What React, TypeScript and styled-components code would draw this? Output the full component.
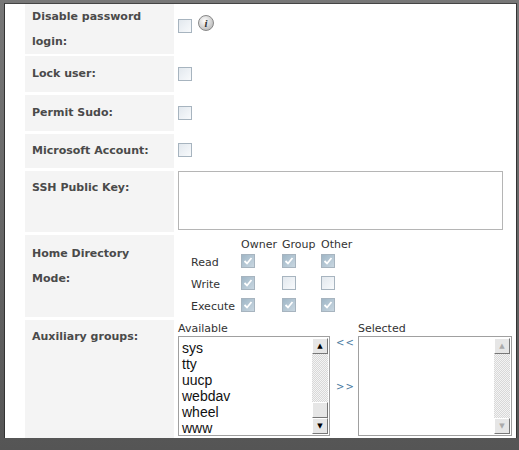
import React from "react";
import styled, { createGlobalStyle } from "styled-components";

const G = createGlobalStyle`
  html, body { margin:0; padding:0; background:#6b6b6b; width:519px; height:450px; overflow:hidden; }
`;
const Page = styled.div`
  width:519px; height:450px; position:relative; background:linear-gradient(#777,#555);
  padding:3px 2px 0 4px; box-sizing:border-box;
`;
const Dialog = styled.div`
  background:#fff; height:435px; border-left:1px solid #333; border-top:1px solid #444; border-right:1px solid #333;
  overflow:hidden; padding-left:20px; box-sizing:border-box;
  font-family:"DejaVu Sans", Verdana, sans-serif;
`;
const Row = styled.div<{ h: number }>`
  display:grid; grid-template-columns:149px 1fr; column-gap:4px; height:${p => p.h}px; margin-bottom:3px;
`;
const Label = styled.div<{ pt: number }>`
  background:#f4f4f4; color:#4a4a4a; font-weight:bold; font-size:11px; line-height:25px;
  padding:${p => p.pt}px 0 0 7px; box-sizing:border-box;
`;
const Value = styled.div<{ pt?: number }>`
  padding-top:${p => p.pt ?? 0}px; display:flex; align-items:flex-start; gap:6px; position:relative;
`;
const Box = styled.span<{ on?: boolean }>`
  display:inline-block; width:14px; height:14px; border:1px solid #a7b4bf;
  background:linear-gradient(135deg,#e2e8ee,#f8fafc); position:relative; box-sizing:border-box;
  ${p => p.on ? `background:linear-gradient(135deg,#9fb6c6,#c9d7e1);` : ""}
`;
const Check = () => (
  <svg width="12" height="12" viewBox="0 0 12 12" style={{ position: "absolute", left: 0, top: 0 }}>
    <path d="M2.5 6 L5 8.5 L9.5 3" stroke="#fff" strokeWidth="1.8" fill="none" />
  </svg>
);
const CB = ({ on }: { on?: boolean }) => <Box on={on}>{on && <Check />}</Box>;
const Info = styled.span`
  width:16px; height:16px; border-radius:50%; background:radial-gradient(circle at 40% 35%,#fff,#aaa);
  border:1px solid #888; box-sizing:border-box; font:italic bold 11px "Liberation Serif",serif; color:#333;
  display:flex; align-items:center; justify-content:center; margin-top:-4px;
`;
const TA = styled.div`
  width:325px; height:59px; border:1px solid #b5b5b5; box-sizing:border-box;
`;
const Perm = styled.div`
  display:grid; grid-template-columns:50px 41px 39px 40px; row-gap:5px; padding:3px 0 0 13px;
  font-size:11px; color:#333; align-items:center; align-content:start;
`;
const PH = styled.div` font-size:11px; color:#333; margin-bottom:-2px; `;
const Groups = styled.div`
  display:grid; grid-template-columns:152px 28px 154px; font-size:11px; color:#333; align-content:start; padding-top:2px;
`;
const ListBox = styled.div`
  height:100px; border:1px solid #a0a0a0; box-sizing:border-box; display:flex; margin-top:1px;
`;
const Items = styled.div`
  flex:1; padding:3px 0 0 3px; font:14px/16px "Liberation Sans", Arial, sans-serif; color:#111;
`;
const Bar = styled.div`
  width:16px; display:flex; flex-direction:column; margin:1px;
  background:repeating-conic-gradient(#d8d8d8 0 25%, #f4f4f4 0 50%) 0 0/2px 2px;
`;
const Btn = styled.div<{ dim?: boolean }>`
  height:16px; background:#e6e6e6; border:1px solid; border-color:#fff #777 #777 #fff; box-sizing:border-box;
  display:flex; align-items:center; justify-content:center; font-size:7px; color:${p => p.dim ? "#aaa" : "#000"};
`;
const Thumb = styled.div` height:14px; background:#e6e6e6; border:1px solid; border-color:#fff #777 #777 #fff; `;
const Arrows = styled.div`
  display:flex; flex-direction:column; gap:33px; padding:2px 0 0 6px; font-size:10px; color:#4a7aa0; letter-spacing:1px;
`;
const Spacer = styled.div` flex:1; `;

export default function App() {
  const perms = [["Read", 1, 1, 1], ["Write", 1, 0, 0], ["Execute", 1, 1, 1]] as const;
  return (
    <Page>
      <G />
      <Dialog>
        <Row h={49}><Label pt={0}>Disable password<br />login:</Label><Value pt={15}><CB /><Info>i</Info></Value></Row>
        <Row h={36}><Label pt={5}>Lock user:</Label><Value pt={11}><CB /></Value></Row>
        <Row h={36}><Label pt={5}>Permit Sudo:</Label><Value pt={11}><CB /></Value></Row>
        <Row h={34}><Label pt={4}>Microsoft Account:</Label><Value pt={9}><CB /></Value></Row>
        <Row h={61}><Label pt={4}><span>SSH Public Key:</span></Label><Value><TA /></Value></Row>
        <Row h={82}>
          <Label pt={6}>Home Directory<br />Mode:</Label>
          <Perm>
            <div /><PH>Owner</PH><PH>Group</PH><PH>Other</PH>
            {perms.map(([n, a, b, c]) => (
              <React.Fragment key={n}>
                <div>{n}</div><div><CB on={!!a} /></div><div><CB on={!!b} /></div><div><CB on={!!c} /></div>
              </React.Fragment>
            ))}
          </Perm>
        </Row>
        <Row h={130}>
          <Label pt={4}>Auxiliary groups:</Label>
          <Groups>
            <div>Available</div><div /><div>Selected</div>
            <ListBox>
              <Items>sys<br />tty<br />uucp<br />webdav<br />wheel<br />www</Items>
              <Bar><Btn>▲</Btn><Spacer /><Thumb /><Btn>▼</Btn></Bar>
            </ListBox>
            <Arrows><span>&lt;&lt;</span><span>&gt;&gt;</span></Arrows>
            <ListBox>
              <Items />
              <Bar><Btn dim>▲</Btn><Spacer /><Btn dim>▼</Btn></Bar>
            </ListBox>
          </Groups>
        </Row>
      </Dialog>
    </Page>
  );
}
